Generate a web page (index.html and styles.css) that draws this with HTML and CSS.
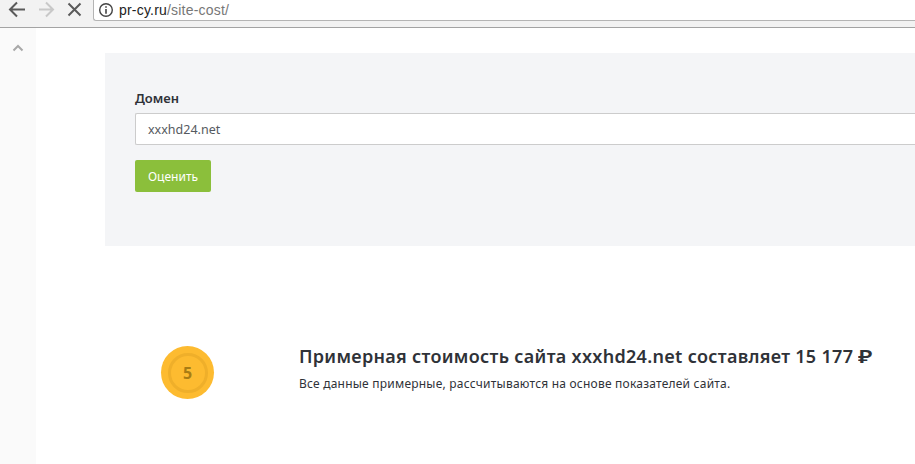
FILE: index.html
```html
<!DOCTYPE html>
<html lang="ru">
<head>
  <meta charset="UTF-8">
  <title>pr-cy.ru/site-cost/</title>
  <link rel="stylesheet" href="styles.css">
</head>
<body>
  <div class="toolbar">
    <div class="nav-buttons">
      <svg class="nav-icon" viewBox="0 0 20 20" width="20" height="20"><path d="M18 10.500H4M10 3.500L3 10.500l7 7" fill="none" stroke="#5a5a5a" stroke-width="2"/></svg>
      <svg class="nav-icon" viewBox="0 0 20 20" width="20" height="20"><path d="M3 10.500h13M10 3.500l7 7-7 7" fill="none" stroke="#c8c8c8" stroke-width="2"/></svg>
      <svg class="nav-icon" viewBox="0 0 20 20" width="20" height="20"><path d="M3.500 4.500l12 12M15.500 4.500l-12 12" fill="none" stroke="#5a5a5a" stroke-width="2"/></svg>
    </div>
    <div class="address">
      <svg class="info-icon" viewBox="0 0 16 16" width="16" height="16"><circle cx="8" cy="8" r="6.300" fill="none" stroke="#444" stroke-width="1.400"/><path d="M7.200 7h1.600v4.800H7.200zM7.200 4.200h1.600v1.600H7.200z" fill="#444"/></svg>
      <span class="host">pr-cy.ru</span><span class="path">/site-cost/</span>
    </div>
  </div>

  <div class="page">
    <aside class="sidebar">
      <svg viewBox="0 0 12 8" width="12" height="8"><path d="M1.500 6.500L6 2l4.500 4.500" fill="none" stroke="#a8a8a8" stroke-width="2"/></svg>
    </aside>

    <main class="content">
      <form class="panel">
        <label class="field-label">Домен</label>
        <div class="field-input">xxxhd24.net</div>
        <div class="submit-btn">Оценить</div>
      </form>

      <section class="result">
        <div class="coin"><div class="coin-inner">5</div></div>
        <div class="result-text">
          <h2>Примерная стоимость сайта xxxhd24.net составляет 15 177 <span class="rub">₽</span></h2>
          <p>Все данные примерные, рассчитываются на основе показателей сайта.</p>
        </div>
      </section>
    </main>
  </div>
</body>
</html>
```

FILE: styles.css
```css
* {
  box-sizing: border-box;
}

html, body {
  height: 100%;
}

body {
  margin: 0;
  overflow: hidden;
  background: #fff;
  color: #2f3238;
  font-family: "Noto Sans", "Open Sans", sans-serif;
  display: flex;
  flex-direction: column;
}

.toolbar {
  height: 28px;
  flex: none;
  display: flex;
  background: #f2f2f2;
  border-bottom: 1px solid #a3a3a3;
}

.nav-buttons {
  width: 93px;
  display: flex;
  gap: 9px;
  padding: 0 0 0 7px;
  align-items: flex-start;
}

.nav-icon {
  display: block;
  margin-top: -1px;
}

.address {
  flex: 1;
  height: 22px;
  margin-top: -1px;
  padding-left: 4px;
  display: flex;
  align-items: center;
  background: #fff;
  border: 1px solid #b4b4b4;
  border-top: none;
  border-right: none;
  border-radius: 0 0 0 3px;
  font-family: "Liberation Sans", sans-serif;
  font-size: 14px;
  letter-spacing: 0.2px;
}

.info-icon {
  margin-right: 5px;
}

.host {
  color: #222;
}

.path {
  color: #777;
}

.page {
  flex: 1;
  display: flex;
}

.sidebar {
  width: 36px;
  flex: none;
  background: #fafafa;
  padding: 16px 0 0 12px;
}

.sidebar svg {
  display: block;
}

.content {
  flex: 1;
  padding: 25px 0 0 69px;
}

.panel {
  height: 193px;
  background: #f4f5f7;
  padding: 36px 0 0 30px;
}

.field-label {
  display: block;
  font-size: 13px;
  font-weight: 600;
  line-height: 18px;
  margin-bottom: 6px;
}

.field-input {
  height: 32px;
  padding-left: 12px;
  display: flex;
  align-items: center;
  background: #fff;
  border: 1px solid #cccccc;
  border-right: none;
  border-radius: 2px 0 0 2px;
  font-size: 12.5px;
  color: #555a60;
}

.submit-btn {
  width: 76px;
  height: 32px;
  margin-top: 15px;
  display: flex;
  align-items: center;
  justify-content: center;
  background: #8bbf3b;
  border-radius: 2px;
  color: #fff;
  font-size: 12px;
}

.result {
  display: flex;
  align-items: flex-start;
  padding: 98px 0 0 56px;
}

.coin {
  width: 53px;
  height: 53px;
  flex: none;
  margin-top: 2px;
  padding: 6.500px;
  border-radius: 50%;
  background: #fdbb30;
}

.coin-inner {
  width: 40px;
  height: 40px;
  border: 3px solid #efaf2a;
  border-radius: 50%;
  display: flex;
  align-items: center;
  justify-content: center;
  color: #a87c14;
  font-size: 16px;
  font-weight: 700;
}

.result-text {
  margin-left: 85px;
  white-space: nowrap;
}

.result-text h2 {
  margin: 0;
  font-size: 18px;
  font-weight: 600;
  letter-spacing: 0.3px;
  line-height: 24px;
}

.rub {
  display: inline-block;
  transform: scaleX(1.35);
  transform-origin: left center;
}

.result-text p {
  margin: 8px 0 0;
  font-size: 12px;
  letter-spacing: 0.22px;
  line-height: 16px;
}
```
